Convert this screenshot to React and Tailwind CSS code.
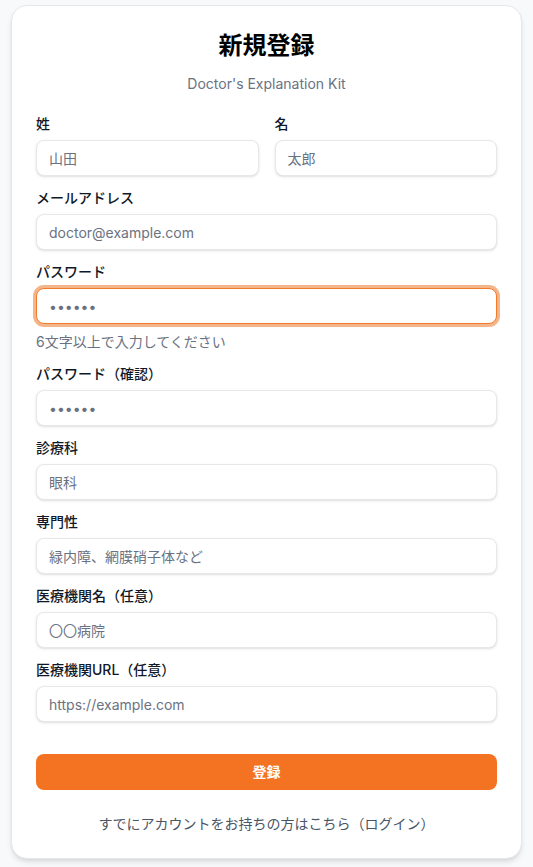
import React from 'react';

const fields = [
  { id: 'email', label: 'メールアドレス', type: 'email', placeholder: 'doctor@example.com' },
];

function Field({ label, type = 'text', placeholder, hint, focused, autoFocus }) {
  return (
    <div>
      <label className="block text-sm font-medium text-gray-900 mb-1.5 leading-5">{label}</label>
      <input
        type={type}
        placeholder={placeholder}
        autoFocus={autoFocus}
        className={`w-full h-9 px-3 rounded-lg bg-white text-sm text-gray-900 placeholder:text-gray-500 shadow-sm outline-none ${
          focused
            ? 'border border-[#f07a2c] ring-[3px] ring-[#f5b58a]'
            : 'border border-gray-200'
        }`}
      />
      {hint && <p className="mt-2 text-sm leading-5 text-gray-500">{hint}</p>}
    </div>
  );
}

export default function App() {
  return (
    <div
      className="min-h-screen bg-[#f8f9fa] px-[11px] py-[5px] flex items-start justify-center"
      style={{ fontFamily: 'Inter, "Noto Sans CJK JP", sans-serif' }}
    >
      <div className="w-full bg-white rounded-2xl border border-gray-200 shadow-md px-6 pt-6 pb-6">
        <h1 className="text-2xl font-bold text-black text-center leading-8">新規登録</h1>
        <p className="mt-3 mb-5 text-sm leading-5 text-gray-500 text-center">Doctor's Explanation Kit</p>

        <form className="space-y-3" onSubmit={(e) => e.preventDefault()}>
          <div className="grid grid-cols-2 gap-4">
            <Field label="姓" placeholder="山田" />
            <Field label="名" placeholder="太郎" />
          </div>
          {fields.map((f) => (
            <Field key={f.id} {...f} />
          ))}
          <Field
            label="パスワード"
            type="password"
            placeholder="••••••"
            hint="6文字以上で入力してください"
            focused
            autoFocus
          />
          <Field label="パスワード（確認）" type="password" placeholder="••••••" />
          <Field label="診療科" placeholder="眼科" />
          <Field label="専門性" placeholder="緑内障、網膜硝子体など" />
          <Field label="医療機関名（任意）" placeholder="〇〇病院" />
          <Field label="医療機関URL（任意）" type="url" placeholder="https://example.com" />

          <div className="pt-5">
            <button
              type="submit"
              className="w-full h-9 rounded-lg bg-[#f37322] text-white text-sm font-bold"
            >
              登録
            </button>
          </div>
        </form>

        <p className="mt-6 text-center text-sm leading-5 text-gray-600">
          すでにアカウントをお持ちの方はこちら（ログイン）
        </p>
      </div>
    </div>
  );
}
